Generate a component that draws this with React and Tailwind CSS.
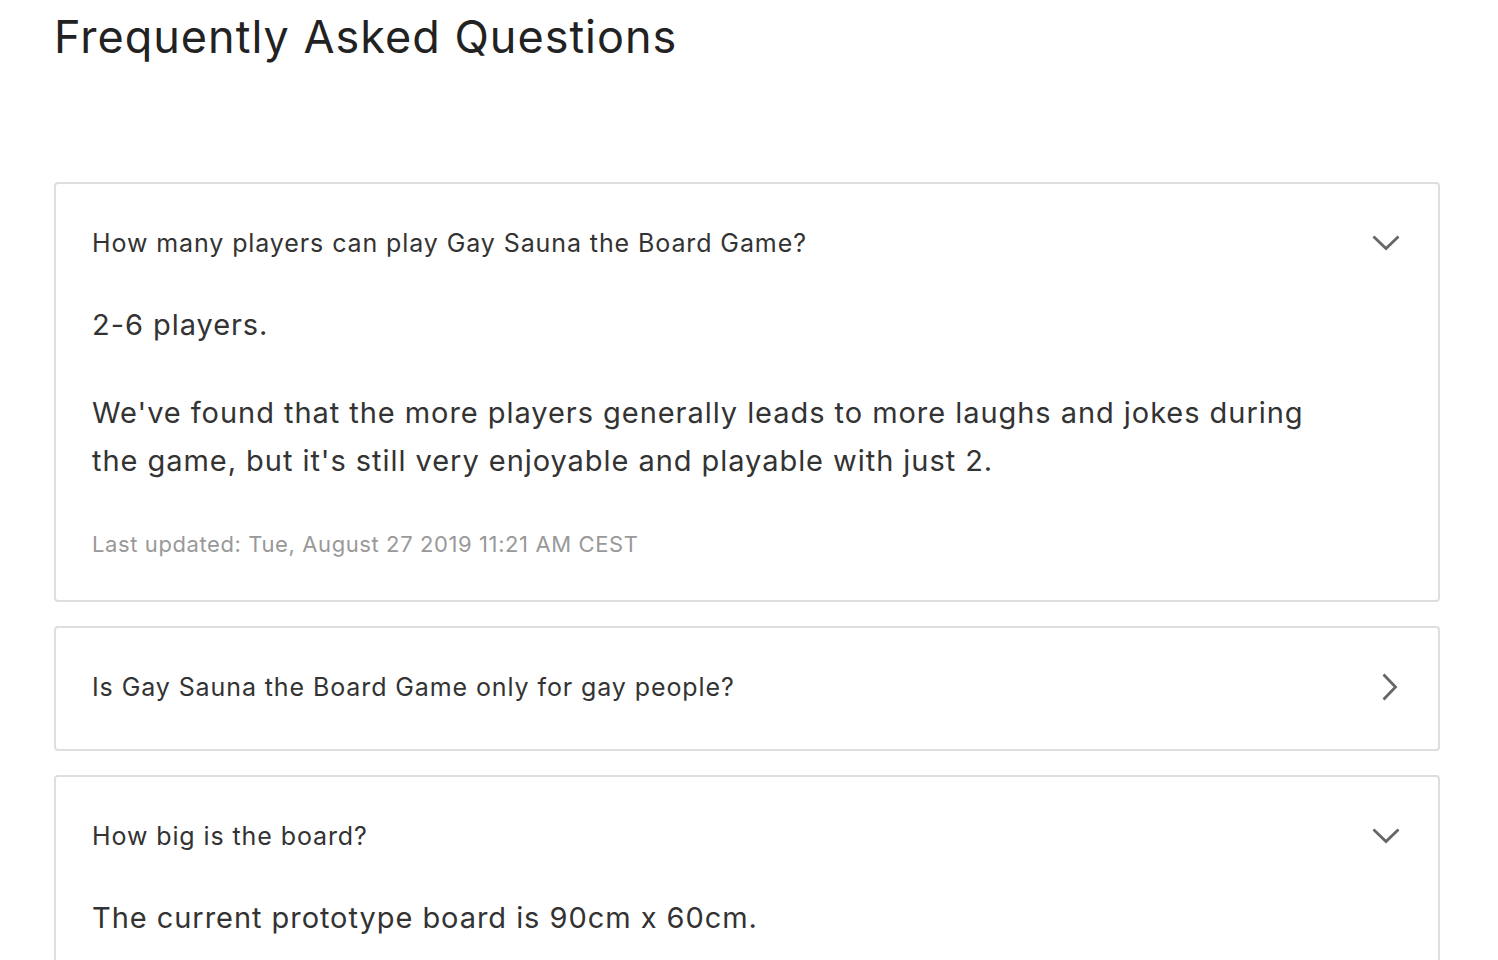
import React from 'react';

const faqs = [
  {
    q: 'How many players can play Gay Sauna the Board Game?',
    open: true,
    a: [
      '2-6 players.',
      "We've found that the more players generally leads to more laughs and jokes during the game, but it's still very enjoyable and playable with just 2.",
    ],
    updated: 'Last updated: Tue, August 27 2019 11:21 AM CEST',
  },
  { q: 'Is Gay Sauna the Board Game only for gay people?', open: false },
  {
    q: 'How big is the board?',
    open: true,
    a: ['The current prototype board is 90cm x 60cm.'],
    updated: 'Last updated: Tue, August 27 2019 11:21 AM CEST',
  },
];

function ChevronDown() {
  return (
    <svg width="28" height="18" viewBox="0 0 28 18" fill="none" stroke="#666" strokeWidth="2.8" strokeLinecap="square">
      <path d="M2.5 3.5 L14 14.5 L25.5 3.5" />
    </svg>
  );
}

function ChevronRight() {
  return (
    <svg width="18" height="28" viewBox="0 0 18 28" fill="none" stroke="#666" strokeWidth="2.8" strokeLinecap="square">
      <path d="M3.5 2.5 L14.5 14 L3.5 25.5" />
    </svg>
  );
}

function FaqCard({ item }) {
  return (
    <div className="rounded-[4px] border-2 border-[#dedede] bg-white px-[36px] pt-[39px] pb-[42px]">
      <div className="flex items-center justify-between">
        <h3 className="text-[25px] leading-[40px] tracking-[0.9px] text-[#333]">{item.q}</h3>
        <div className={`flex w-[28px] ${item.open ? 'mr-[2px] justify-center' : 'mr-[3px] justify-end'}`}>
          {item.open ? <ChevronDown /> : <ChevronRight />}
        </div>
      </div>
      {item.open && (
        <div className="mt-[38px] pr-[80px]">
          {item.a.map((p, i) => (
            <p key={i} className={`text-[29px] leading-[48px] tracking-[0.95px] text-[#333] ${i > 0 ? 'mt-[40px]' : ''}`}>
              {p}
            </p>
          ))}
          <p className="mt-[45px] text-[22px] leading-[28px] tracking-[0.6px] text-[#999]">{item.updated}</p>
        </div>
      )}
    </div>
  );
}

export default function App() {
  return (
    <div className="min-h-screen bg-white pl-[54px] pr-[58px]" style={{ fontFamily: 'Inter, "Liberation Sans", sans-serif' }}>
      <h1 className="pt-[11px] text-[45px] leading-[52px] tracking-[1px] font-normal text-[#222]">Frequently Asked Questions</h1>
      <div className="mt-[119px] flex flex-col gap-[24px]">
        {faqs.map((f, i) => (
          <FaqCard key={i} item={f} />
        ))}
      </div>
    </div>
  );
}
